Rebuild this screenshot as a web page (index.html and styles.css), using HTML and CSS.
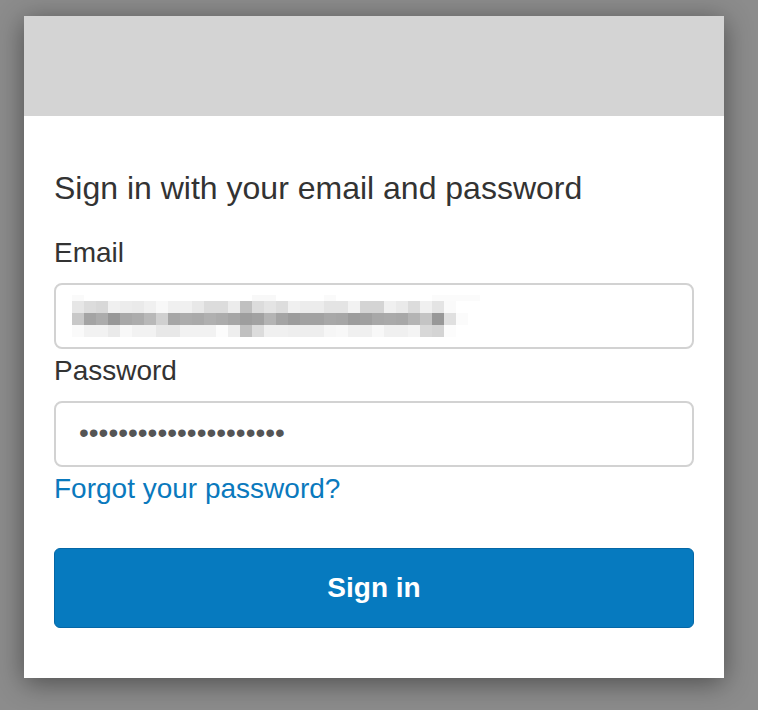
FILE: index.html
```html
<!DOCTYPE html>
<html lang="en">
<head>
  <meta charset="UTF-8">
  <meta name="viewport" content="width=device-width, initial-scale=1.0">
  <title>Sign in</title>
  <link rel="stylesheet" href="styles.css">
</head>
<body>

  <div class="card">
    <!-- Logo / banner area -->
    <div class="banner"></div>

    <form class="signin-form">
      <h1 class="title">Sign in with your email and password</h1>

      <label class="label">Email</label>
      <div class="field field-email">
        <!-- blurred (pixelated) email address -->
        <svg class="mosaic" width="408" height="48" viewBox="0 0 408 48">
          <g>
            <rect x="0" y="6" width="12" height="6" fill="#fafafa"/>
            <rect x="180" y="6" width="24" height="6" fill="#f8f8f8"/>
            <rect x="252" y="6" width="12" height="6" fill="#fafafa"/>
            <rect x="360" y="6" width="48" height="6" fill="#fbfbfb"/>
          </g>
          <g>
            <rect x="0" y="12" width="12" height="12" fill="#e6e6e6"/>
            <rect x="12" y="12" width="12" height="12" fill="#dcdcdc"/>
            <rect x="24" y="12" width="12" height="12" fill="#d8d8d8"/>
            <rect x="36" y="12" width="12" height="12" fill="#f0f0f0"/>
            <rect x="48" y="12" width="12" height="12" fill="#ececec"/>
            <rect x="60" y="12" width="12" height="12" fill="#eaeaea"/>
            <rect x="72" y="12" width="12" height="12" fill="#f0f0f0"/>
            <rect x="84" y="12" width="12" height="12" fill="#f8f8f8"/>
            <rect x="96" y="12" width="12" height="12" fill="#f0f0f0"/>
            <rect x="108" y="12" width="12" height="12" fill="#f0f0f0"/>
            <rect x="120" y="12" width="12" height="12" fill="#e8e8e8"/>
            <rect x="132" y="12" width="12" height="12" fill="#dcdcdc"/>
            <rect x="144" y="12" width="12" height="12" fill="#dcdcdc"/>
            <rect x="156" y="12" width="12" height="12" fill="#ececec"/>
            <rect x="168" y="12" width="12" height="12" fill="#c0c0c0"/>
            <rect x="180" y="12" width="12" height="12" fill="#dcdcdc"/>
            <rect x="192" y="12" width="12" height="12" fill="#e4e4e4"/>
            <rect x="204" y="12" width="12" height="12" fill="#dddddd"/>
            <rect x="216" y="12" width="12" height="12" fill="#f0f0f0"/>
            <rect x="228" y="12" width="12" height="12" fill="#ececec"/>
            <rect x="240" y="12" width="12" height="12" fill="#ececec"/>
            <rect x="252" y="12" width="12" height="12" fill="#e4e4e4"/>
            <rect x="264" y="12" width="12" height="12" fill="#e4e4e4"/>
            <rect x="276" y="12" width="12" height="12" fill="#f2f2f2"/>
            <rect x="288" y="12" width="12" height="12" fill="#d4d4d4"/>
            <rect x="300" y="12" width="12" height="12" fill="#d4d4d4"/>
            <rect x="312" y="12" width="12" height="12" fill="#f0f0f0"/>
            <rect x="324" y="12" width="12" height="12" fill="#eaeaea"/>
            <rect x="336" y="12" width="12" height="12" fill="#dcdcdc"/>
            <rect x="348" y="12" width="12" height="12" fill="#f0f0f0"/>
            <rect x="360" y="12" width="12" height="12" fill="#e4e4e4"/>
            <rect x="372" y="12" width="12" height="12" fill="#fafafa"/>
          </g>
          <g>
            <rect x="0" y="24" width="12" height="12" fill="#c8c8c8"/>
            <rect x="12" y="24" width="12" height="12" fill="#a4a4a4"/>
            <rect x="24" y="24" width="12" height="12" fill="#acacac"/>
            <rect x="36" y="24" width="12" height="12" fill="#989898"/>
            <rect x="48" y="24" width="12" height="12" fill="#a8a8a8"/>
            <rect x="60" y="24" width="12" height="12" fill="#acacac"/>
            <rect x="72" y="24" width="12" height="12" fill="#b8b8b8"/>
            <rect x="84" y="24" width="12" height="12" fill="#d0d0d0"/>
            <rect x="96" y="24" width="12" height="12" fill="#a6a6a6"/>
            <rect x="108" y="24" width="12" height="12" fill="#acacac"/>
            <rect x="120" y="24" width="12" height="12" fill="#aaaaaa"/>
            <rect x="132" y="24" width="12" height="12" fill="#b0b0b0"/>
            <rect x="144" y="24" width="12" height="12" fill="#acacac"/>
            <rect x="156" y="24" width="12" height="12" fill="#a6a6a6"/>
            <rect x="168" y="24" width="12" height="12" fill="#9e9e9e"/>
            <rect x="180" y="24" width="12" height="12" fill="#a2a2a2"/>
            <rect x="192" y="24" width="12" height="12" fill="#b4b4b4"/>
            <rect x="204" y="24" width="12" height="12" fill="#a4a4a4"/>
            <rect x="216" y="24" width="12" height="12" fill="#9c9c9c"/>
            <rect x="228" y="24" width="12" height="12" fill="#a2a2a2"/>
            <rect x="240" y="24" width="12" height="12" fill="#a2a2a2"/>
            <rect x="252" y="24" width="12" height="12" fill="#a8a8a8"/>
            <rect x="264" y="24" width="12" height="12" fill="#a6a6a6"/>
            <rect x="276" y="24" width="12" height="12" fill="#9c9c9c"/>
            <rect x="288" y="24" width="12" height="12" fill="#a0a0a0"/>
            <rect x="300" y="24" width="12" height="12" fill="#a8a8a8"/>
            <rect x="312" y="24" width="12" height="12" fill="#aaaaaa"/>
            <rect x="324" y="24" width="12" height="12" fill="#a8a8a8"/>
            <rect x="336" y="24" width="12" height="12" fill="#b4b4b4"/>
            <rect x="348" y="24" width="12" height="12" fill="#c4c4c4"/>
            <rect x="360" y="24" width="12" height="12" fill="#989898"/>
            <rect x="372" y="24" width="12" height="12" fill="#e0e0e0"/>
            <rect x="384" y="24" width="12" height="12" fill="#fbfbfb"/>
          </g>
          <g>
            <rect x="0" y="36" width="12" height="12" fill="#fafafa"/>
            <rect x="12" y="36" width="12" height="12" fill="#f2f2f2"/>
            <rect x="24" y="36" width="12" height="12" fill="#f2f2f2"/>
            <rect x="36" y="36" width="12" height="12" fill="#eaeaea"/>
            <rect x="48" y="36" width="12" height="12" fill="#f8f8f8"/>
            <rect x="60" y="36" width="12" height="12" fill="#f2f2f2"/>
            <rect x="72" y="36" width="12" height="12" fill="#f2f2f2"/>
            <rect x="84" y="36" width="12" height="12" fill="#e8e8e8"/>
            <rect x="96" y="36" width="12" height="12" fill="#e8e8e8"/>
            <rect x="108" y="36" width="12" height="12" fill="#f2f2f2"/>
            <rect x="120" y="36" width="12" height="12" fill="#f2f2f2"/>
            <rect x="132" y="36" width="12" height="12" fill="#f2f2f2"/>
            <rect x="144" y="36" width="12" height="12" fill="#fcfcfc"/>
            <rect x="156" y="36" width="12" height="12" fill="#eeeeee"/>
            <rect x="168" y="36" width="12" height="12" fill="#c0c0c0"/>
            <rect x="180" y="36" width="12" height="12" fill="#dcdcdc"/>
            <rect x="192" y="36" width="12" height="12" fill="#f0f0f0"/>
            <rect x="204" y="36" width="12" height="12" fill="#f0f0f0"/>
            <rect x="216" y="36" width="12" height="12" fill="#eeeeee"/>
            <rect x="228" y="36" width="12" height="12" fill="#eeeeee"/>
            <rect x="240" y="36" width="12" height="12" fill="#eeeeee"/>
            <rect x="252" y="36" width="12" height="12" fill="#f6f6f6"/>
            <rect x="264" y="36" width="12" height="12" fill="#f8f8f8"/>
            <rect x="276" y="36" width="12" height="12" fill="#f0f0f0"/>
            <rect x="288" y="36" width="12" height="12" fill="#f0f0f0"/>
            <rect x="300" y="36" width="12" height="12" fill="#f8f8f8"/>
            <rect x="312" y="36" width="12" height="12" fill="#f0f0f0"/>
            <rect x="324" y="36" width="12" height="12" fill="#f0f0f0"/>
            <rect x="336" y="36" width="12" height="12" fill="#f4f4f4"/>
            <rect x="348" y="36" width="12" height="12" fill="#d8d8d8"/>
            <rect x="360" y="36" width="12" height="12" fill="#d4d4d4"/>
            <rect x="372" y="36" width="12" height="12" fill="#fcfcfc"/>
          </g>
        </svg>
      </div>

      <label class="label">Password</label>
      <div class="field field-password">
        <span class="dots">•••••••••••••••••••••</span>
      </div>

      <a href="#" class="forgot">Forgot your password?</a>

      <button type="button" class="signin-button">Sign in</button>
    </form>
  </div>

</body>
</html>
```

FILE: styles.css
```css
/* page */
html, body {
  margin: 0;
  height: 100%;
}

body {
  background-color: #8c8c8c;
  font-family: "Liberation Sans", Arial, sans-serif;
  padding: 16px 0 0 24px;
  box-sizing: border-box;
}

/* card */
.card {
  width: 700px;
  background-color: #fff;
  box-shadow: 0 5px 26px rgba(0, 0, 0, 0.45);
}

.banner {
  height: 100px;
  background-color: #d4d4d4;
}

.signin-form {
  display: flex;
  flex-direction: column;
  padding: 54px 30px 50px;
}

.title {
  margin: 0 0 31px;
  font-size: 32px;
  line-height: 36px;
  font-weight: normal;
  color: #333;
}

.label {
  font-size: 28px;
  line-height: 32px;
  color: #333;
  margin-bottom: 14px;
}

/* inputs */
.field {
  height: 66px;
  box-sizing: border-box;
  border: 2px solid #d2d2d2;
  border-radius: 8px;
  display: flex;
  margin-bottom: 6px;
}

.field-email {
  align-items: flex-start;
  padding: 4px 16px 0;
}

.field-password {
  align-items: center;
  padding: 0 23px;
}

.dots {
  font-size: 28px;
  color: #555;
  padding-bottom: 2px;
}

.forgot {
  align-self: flex-start;
  font-size: 28px;
  line-height: 32px;
  color: #0a79bd;
  text-decoration: none;
  margin-bottom: 43px;
}

.forgot:hover {
  text-decoration: underline;
}

/* button */
.signin-button {
  height: 80px;
  background-color: #067abf;
  border: 1px solid #0567a6;
  border-radius: 6px;
  color: #fff;
  font-family: "Liberation Sans", Arial, sans-serif;
  font-size: 28px;
  font-weight: bold;
  cursor: pointer;
}

.signin-button:hover {
  background-color: #0569a8;
}
```
